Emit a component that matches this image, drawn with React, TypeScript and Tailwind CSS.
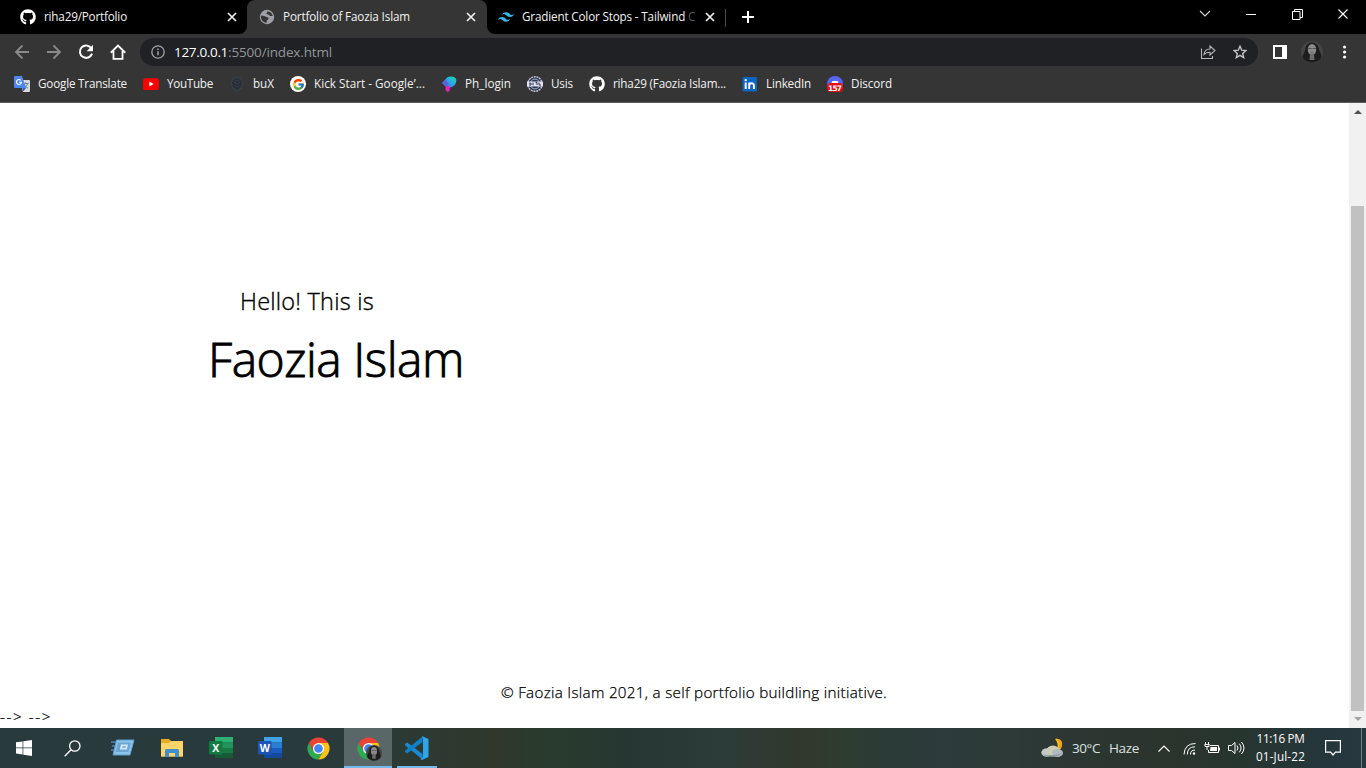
import { useLayoutEffect, useRef, useState, type ReactNode } from "react";
import { FaGithub } from "react-icons/fa";
import { SiTailwindcss } from "react-icons/si";
import { FcGoogle } from "react-icons/fc";

/** Single-line label whose tracking is measured so that it fills `width` pixels. */
function Label({ text, width, className = "" }: { text: string; width: number; className?: string }) {
  const ref = useRef<HTMLSpanElement>(null);
  const [tracking, setTracking] = useState(0);
  useLayoutEffect(() => {
    if (ref.current) {
      const natural = ref.current.getBoundingClientRect().width;
      setTracking((t) => t + (width - natural) / text.length);
    }
  }, [text, width]);
  return (
    <span ref={ref} style={{ letterSpacing: tracking }} className={`inline-block shrink-0 whitespace-pre ${className}`}>
      {text}
    </span>
  );
}

function TabClose() {
  return (
    <svg className="size-[10px] shrink-0" viewBox="0 0 10 10" stroke="#f1f1f1" strokeWidth="1.7">
      <path d="M1 1l8 8M9 1L1 9" />
    </svg>
  );
}

function Globe() {
  return (
    <svg className="size-4 shrink-0" viewBox="0 0 16 16">
      <circle cx="8" cy="8" r="7.200" fill="#9da1a5" />
      <path d="M1.800 6.800c2.200-.2 3.500-.2 4.700.8 1.200.9 2.900.5 3.100 1.800.2 1-1.200 1-1.700 2l-.5 2.500C4.500 13.300 2.500 11.500 2 9z" fill="#353535" />
      <path d="M8.500 2.300c.1 1.300-1.300 1.300-1 2.400.4 1 2 .5 2.500 1.200.7.900 1.600 1.400 3.700 1-.3-2.400-2.400-4.300-5.200-4.600z" fill="#353535" />
    </svg>
  );
}

function ChromeLogo({ className }: { className: string }) {
  return (
    <svg className={className} viewBox="0 0 48 48">
      <path d="M24 24L33.960 29.750 24 47A23 23 0 0 1 4.080 12.500L14.040 29.750z" fill="#2da94f" />
      <path d="M24 12.500H43.920A23 23 0 0 1 24 47L33.950 29.750z" fill="#fbc116" />
      <path d="M14.040 29.750L4.080 12.500A23 23 0 0 1 43.920 12.500H24z" fill="#ea4335" />
      <circle cx="24" cy="24" r="11.500" fill="#fff" />
      <circle cx="24" cy="24" r="9" fill="#4285f4" />
    </svg>
  );
}

function Portrait({ className }: { className: string }) {
  return (
    <svg className={className} viewBox="0 0 22 22">
      <circle cx="11" cy="11" r="11" fill="#454545" />
      <path d="M2.500 18C0 15 4 12 4.500 7 6 0 15.500-.5 17.500 6.500c.5 4 4.500 7 2 11.500-4 4.500-13 4.500-17 0z" fill="#1d1d1d" />
      <ellipse cx="11" cy="8.500" rx="4.200" ry="5.600" fill="#8c8c8c" />
      <path d="M9 12.500h4l.5 6.500h-5z" fill="#6c6c6c" />
      <path d="M7.500 7.500h3M11.700 7.500h3" stroke="#444" strokeWidth=".9" />
      <path d="M9.700 11.200h2.600" stroke="#555" strokeWidth=".7" />
    </svg>
  );
}

function TranslateIcon() {
  return (
    <svg className="size-4" viewBox="0 0 16 16">
      <path d="M6 4h9a1 1 0 0 1 1 1v10a1 1 0 0 1-1 1H9z" fill="#d5d9dd" />
      <path d="M9 7.500h5.500M11.700 6.500v1M13.500 7.700c-.5 2-2 3.500-3.500 4.300M10.500 9c.8 1.500 2 2.500 3.300 3" stroke="#6b7f91" strokeWidth="1" fill="none" />
      <path d="M1 0h7l4 12H1a1 1 0 0 1-1-1V1a1 1 0 0 1 1-1z" fill="#4a87ee" />
      <path d="M8.500 12H12l-2.800 3.500z" fill="#3059b0" />
      <path d="M7 4.400A2.500 2.500 0 1 0 7.500 6.300H5" stroke="#fff" strokeWidth="1.100" fill="none" />
    </svg>
  );
}

function YouTubeIcon() {
  return (
    <svg className="size-4" viewBox="0 0 16 16">
      <rect y="2.200" width="16" height="11.800" rx="2.600" fill="#f00" />
      <path d="M6.300 5.600v5L10.700 8.100z" fill="#fff" />
    </svg>
  );
}

function BuxIcon() {
  return (
    <svg className="size-4" viewBox="0 0 16 16">
      <path d="M4 2.500Q8 0 12 2.500c2 3.500 2 7.500-1 10.500l-3 2-3-2C2 10 2 6 4 2.500z" fill="#292e37" stroke="#3c4657" strokeWidth="1" />
      <path d="M5 6l3 2 3-2M5.500 9.500L8 11l2.500-1.500M6 4l2 1 2-1" stroke="#3c4657" strokeWidth=".7" fill="none" />
    </svg>
  );
}

function GoogleBadge() {
  return (
    <span className="flex size-4 items-center justify-center rounded-full bg-white">
      <FcGoogle className="size-[13px]" />
    </span>
  );
}

function PhIcon() {
  return (
    <svg className="size-4" viewBox="0 0 16 16">
      <defs>
        <linearGradient id="ph" x1="1" y1="0" x2="0" y2="1">
          <stop offset="0" stopColor="#12dfb0" />
          <stop offset=".5" stopColor="#2aa5e8" />
          <stop offset="1" stopColor="#8b3df0" />
        </linearGradient>
      </defs>
      <path d="M6 1.500C10-.5 15 .5 15.300 4c.3 4-2.800 7-6.300 7.500L1 7.500z" fill="url(#ph)" />
      <path d="M1 6.500l3.500-3L8 8l-3 3.500z" fill="#5963d8" />
      <path d="M5 10l4 .5-.5 4.500-2 1-2-2z" fill="#f51fc0" />
    </svg>
  );
}

function UsisIcon() {
  return (
    <svg className="size-4" viewBox="0 0 16 16">
      <circle cx="8" cy="8" r="7.200" fill="#2c3354" stroke="#c9cde0" strokeWidth="1.400" strokeDasharray="2 .7" />
      <circle cx="8" cy="8" r="4.900" fill="none" stroke="#b4b9d0" strokeWidth=".9" />
      <rect y="5.500" width="16" height="5" fill="#dfe2ed" />
      <path d="M2 7.200h2v1.800H2M6 6.500v2.800M8.500 6.500h1.500v2.500M12 6.500v2.500h2" stroke="#2c3354" strokeWidth="1" fill="none" />
    </svg>
  );
}

function LinkedInIcon() {
  return (
    <svg className="size-4" viewBox="0 0 16 16">
      <rect x=".5" y="1" width="14.500" height="14.500" rx="1" fill="#0a66c2" />
      <path d="M3.700 6.500v6.500" stroke="#fff" strokeWidth="2" />
      <circle cx="3.700" cy="4.100" r="1.200" fill="#fff" />
      <path d="M7.200 13V6.500M7.200 9.500c.2-2.800 4.700-3.200 4.700 0V13" stroke="#fff" strokeWidth="1.900" fill="none" />
    </svg>
  );
}

function DiscordIcon() {
  return (
    <svg className="size-4" viewBox="0 0 16 16">
      <circle cx="8" cy="8" r="8" fill="#5865f2" />
      <path d="M4.500 7L5.500 5h5l1 2z" fill="#fff" />
      <rect y="7" width="16" height="9" rx="4" fill="#e30f13" />
      <text x="8" y="14.700" textAnchor="middle" textLength="14" fontSize="7.500" fontWeight="700" fontFamily="DejaVu Sans" fill="#fff">157</text>
    </svg>
  );
}

const bookmarks: { name: string; width: number; icon: ReactNode }[] = [
  { name: "Google Translate", width: 89, icon: <TranslateIcon /> },
  { name: "YouTube", width: 46, icon: <YouTubeIcon /> },
  { name: "buX", width: 21, icon: <BuxIcon /> },
  { name: "Kick Start - Google’...", width: 111, icon: <GoogleBadge /> },
  { name: "Ph_login", width: 46, icon: <PhIcon /> },
  { name: "Usis", width: 22, icon: <UsisIcon /> },
  { name: "riha29 (Faozia Islam...", width: 113, icon: <FaGithub className="size-4 text-white" /> },
  { name: "LinkedIn", width: 45, icon: <LinkedInIcon /> },
  { name: "Discord", width: 41, icon: <DiscordIcon /> },
];

function TabStrip() {
  return (
    <div className="flex h-[34px] bg-black text-[11.7px] leading-[32px] text-[#f1f1f1]">
      <div className="flex w-[247px] items-center pl-5">
        <FaGithub className="size-4 shrink-0 text-white" />
        <Label text="riha29/Portfolio" width={83} className="mb-[2px] ml-2" />
        <span className="mr-[10px] ml-auto flex"><TabClose /></span>
      </div>
      <div className="relative flex w-[240px] items-center rounded-t-lg bg-[#353535] pl-3">
        <svg className="absolute bottom-0 -left-2 size-2" viewBox="0 0 8 8"><path d="M8 0v8H0a8 8 0 0 0 8-8z" fill="#353535" /></svg>
        <svg className="absolute -right-2 bottom-0 size-2" viewBox="0 0 8 8"><path d="M0 0v8h8a8 8 0 0 1-8-8z" fill="#353535" /></svg>
        <Globe />
        <Label text="Portfolio of Faozia Islam" width={127} className="mb-[2px] ml-2" />
        <span className="mr-[11px] ml-auto flex"><TabClose /></span>
      </div>
      <div className="flex w-[239px] items-center pl-[11px]">
        <SiTailwindcss className="size-4 shrink-0 text-[#38b6e8]" />
        <span className="mb-[2px] ml-2 flex w-[175px] overflow-hidden">
          <Label text="Gradient Color Stops - Tailwind " width={166} />
          <span className="text-[#5c5c5c]">C</span>
        </span>
        <span className="mr-[11px] ml-auto flex"><TabClose /></span>
      </div>
      <div className="mt-[9px] -ml-px h-[18px] w-px bg-[#4a4a4a]" />
      <svg className="mt-[11px] ml-4 size-3" viewBox="0 0 12 12" stroke="#fff" strokeWidth="2"><path d="M6 0v12M0 6h12" /></svg>
      <svg className="mt-[10px] ml-auto h-[8px] w-[12px]" viewBox="0 0 12 8" fill="none" stroke="#d5d5d5" strokeWidth="1.100"><path d="M1 1l5 5 5-5" /></svg>
      <svg className="mt-[9px] ml-[35px] h-[11px] w-[10px]" viewBox="0 0 10 11"><path d="M0 5.500h10" stroke="#fff" /></svg>
      <svg className="mt-[9px] ml-9 size-[11px]" viewBox="0 0 11 11" fill="none" stroke="#fff"><path d="M.5 2.500h7.500v8H.5zM2.500 2.500v-2h8v8H8" /></svg>
      <svg className="mt-[9px] mr-[18px] ml-[35px] size-[10px]" viewBox="0 0 10 10" stroke="#fff" strokeWidth="1.200"><path d="M.5.5l9 9M9.500.5l-9 9" /></svg>
    </div>
  );
}

function Toolbar() {
  return (
    <div className="flex h-9 items-center pl-[14px]">
      <svg className="size-4" viewBox="0 0 16 16" fill="none" stroke="#8a8a8a" strokeWidth="1.800"><path d="M15 8H2M8.500 1.500L2 8l6.500 6.500" /></svg>
      <svg className="ml-4 size-4" viewBox="0 0 16 16" fill="none" stroke="#8a8a8a" strokeWidth="1.800"><path d="M1 8h13M7.500 1.500L14 8l-6.500 6.500" /></svg>
      <svg className="ml-4 size-4" viewBox="0 0 16 16"><path d="M13.200 4.100A6.200 6.200 0 1 0 14 9.600" fill="none" stroke="#fff" strokeWidth="2" /><path d="M15 .8v6.400H8.600z" fill="#fff" /></svg>
      <svg className="ml-4 size-4" viewBox="0 0 17 17" fill="none" stroke="#fff" strokeWidth="1.900"><path d="M.8 9.300L8.500 1.600l7.700 7.700M3.700 7.500v8.200h9.600V7.500" /></svg>
      <div className="ml-[14px] flex h-7 w-[1118px] items-center rounded-full bg-[#202124] pl-[11px] text-[13.500px] leading-7">
        <svg className="size-[14px]" viewBox="0 0 14 14" fill="none" stroke="#a0a4a8" strokeWidth="1.300"><circle cx="7" cy="7" r="6.200" /><path d="M7 6.200v4M7 3.500v1.400" strokeWidth="1.500" /></svg>
        <Label text="127.0.0.1" width={54} className="ml-[9px] text-white" />
        <Label text=":5500/index.html" width={104} className="text-[#92969b]" />
        <svg className="ml-auto size-4" viewBox="0 0 16 16" fill="none" stroke="#b4b6b8" strokeWidth="1.100"><path d="M1.500 4.500v10h11v-2.500M4 10.500c.3-3.500 2.500-5.500 6-5.500V2l5 4.500L10 11V8.200c-2.700 0-4.500.6-6 2.300z" /></svg>
        <svg className="mr-[11px] ml-[17px] size-[14px]" viewBox="0 0 14 14" fill="none" stroke="#c3c5c7" strokeWidth="1.400"><path d="M7 1.300l1.700 3.900 4.200.4-3.200 2.800 1 4.200L7 10.400l-3.700 2.200 1-4.200L1.100 5.600l4.200-.4z" /></svg>
      </div>
      <svg className="ml-[15px] size-[14px]" viewBox="0 0 14 14"><path d="M0 0h14v14H0zM2 2v10h7V2z" fill="#fff" fillRule="evenodd" /></svg>
      <Portrait className="ml-[14px] size-[22px]" />
      <svg className="ml-5 h-[14px] w-1" viewBox="0 0 4 14" fill="#fff"><circle cx="1.600" cy="2" r="1.600" /><circle cx="1.600" cy="7" r="1.600" /><circle cx="1.600" cy="12" r="1.600" /></svg>
    </div>
  );
}

function BookmarkBar() {
  return (
    <div className="flex h-[33px] items-start gap-4 border-b border-[#5c5c5c] pt-[6px] pl-[14px] text-[11.700px] leading-[15px] text-[#f1f1f1]">
      {bookmarks.map((b) => (
        <div key={b.name} className="flex items-start gap-2">
          {b.icon}
          <Label text={b.name} width={b.width} />
        </div>
      ))}
    </div>
  );
}

function Page() {
  return (
    <div className="flex h-[625px] bg-white text-black">
      <main className="flex flex-1 flex-col font-light">
        <div className="pt-[182px] pl-[240px] text-[23.500px] leading-8 [-webkit-text-stroke:0.35px_black]"><Label text="Hello! This is" width={134} /></div>
        <div className="pt-[10px] pl-[208px] text-[48px] leading-[64px] [-webkit-text-stroke:0.9px_black]"><Label text="Faozia Islam" width={256} /></div>
        <div className="mt-auto pl-[501px] text-[15.200px] leading-6 [-webkit-text-stroke:0.25px_black]"><Label text="© Faozia Islam 2021, a self portfolio buildling initiative." width={386} /></div>
        <div className="pt-px text-[15px] leading-[23px] [-webkit-text-stroke:0.25px_black]"><Label text="--> -->" width={52} /></div>
      </main>
      <div className="flex w-[17px] flex-col items-center bg-[#f1f1f1]">
        <svg className="mt-[7px] h-[4px] w-[8px] shrink-0" viewBox="0 0 8 4"><path d="M0 4l4-4 4 4z" fill="#505050" /></svg>
        <div className="mt-[92px] h-[505px] w-[13px] bg-[#c1c1c1]" />
        <svg className="mt-[6px] h-[4px] w-[8px] shrink-0" viewBox="0 0 8 4"><path d="M0 0h8L4 4z" fill="#a3a3a3" /></svg>
      </div>
    </div>
  );
}

function OfficeIcon({ letter, shades }: { letter: string; shades: string[] }) {
  return (
    <svg className="size-6" viewBox="0 0 24 24">
      <rect x="6" y="1" width="18" height="5.500" fill={shades[0]} />
      <rect x="6" y="6.500" width="18" height="5.500" fill={shades[1]} />
      <rect x="6" y="12" width="18" height="5" fill={shades[2]} />
      <rect x="6" y="17" width="18" height="5" fill={shades[3]} />
      <rect y="5" width="13.500" height="13.500" rx="1" fill={shades[4]} />
      <text x="6.800" y="15.500" textAnchor="middle" fontSize="10.500" fontWeight="700" fontFamily="Open Sans" fill="#fff">{letter}</text>
    </svg>
  );
}

function Taskbar() {
  return (
    <div className="flex h-10 items-center text-white">
      <div className="flex h-10 w-[500px] items-center bg-[linear-gradient(90deg,#293a3d_0%,#293a3d_60%,#2b3a35_78%,#30382b_100%)]">
        <svg className="ml-4 size-4" viewBox="0 0 16 16" fill="#fff"><path d="M0 2.300l6.600-.9v6.100H0zM7.300 1.300L16 0v7.500H7.300zM0 8.300h6.600v6.200L0 13.600zM7.300 8.300H16V16l-8.700-1.300z" /></svg>
        <svg className="ml-8 size-[17px]" viewBox="0 0 17 17" fill="none" stroke="#fff" strokeWidth="1.300"><circle cx="10.800" cy="6" r="5.200" /><path d="M7 9.800L.7 16.200" /></svg>
        <svg className="ml-[30px] h-[18px] w-6" viewBox="0 0 24 18">
          <path d="M0 3h5M1 7h5M0 11h5" stroke="#4c87ab" strokeWidth="1.500" />
          <path d="M5.500 1H23l-4 15H2z" fill="#8fc4ea" stroke="#5b9dcd" />
          <path d="M7 3.500h13L17.500 13h-13z" fill="#6ba6d3" />
          <path d="M10 5.500h7l-1.200 5H8.800z" fill="#d1e9fa" />
          <path d="M11.500 7.200h3.500l-.4 1.600H11z" fill="#6ba6d3" />
        </svg>
        <svg className="ml-[26px] h-[18px] w-[22px]" viewBox="0 0 22 18">
          <path d="M0 0h8l2 2h11a1 1 0 0 1 1 1v14.500H0z" fill="#e9a826" />
          <path d="M0 4h8l2-2h12v15.500H0z" fill="#ffd56a" />
          <path d="M4 18v-6.500a1.500 1.500 0 0 1 1.500-1.500h11a1.500 1.500 0 0 1 1.500 1.500V18h-4v-4H8v4z" fill="#3e8fcb" />
        </svg>
        <span className="ml-[26px]"><OfficeIcon letter="X" shades={["#2db274", "#20945a", "#187943", "#155b36", "#107c41"]} /></span>
        <span className="ml-[25px]"><OfficeIcon letter="W" shades={["#3fa3e8", "#2b7cd3", "#1b5bbd", "#134a9d", "#1b55b8"]} /></span>
        <ChromeLogo className="ml-[25px] size-[23px]" />
        <div className="relative ml-[14px] flex h-10 w-12 items-center justify-center border-b-2 border-[#76b9ed] bg-[#596769] pt-[2px]">
          <ChromeLogo className="size-[23px]" />
          <Portrait className="absolute top-[17px] left-[22px] size-4" />
        </div>
        <div className="ml-[5px] flex h-10 w-10 items-center justify-center border-b-2 border-[#76b9ed] pt-[2px]">
          <svg className="size-6" viewBox="0 0 24 24">
            <path d="M0 8l2-1.500 4 2.800L17.500 18v5.500L0 9.300z" fill="#1a8bd3" />
            <path d="M0 16l2 1.500L17.500 6V.5L0 14.700z" fill="#0f7fc9" />
            <path d="M17 0l6.500 3v18L17 24l-1.500-.7L18 21V3z" fill="#2fa4ea" />
          </svg>
        </div>
      </div>
      <div className="h-10 w-[520px] bg-[linear-gradient(90deg,#30382b_0%,#2a3b2e_6%,#28392e_15%,#263733_24%,#2c3c39_43%,#2f3a31_51%,#31382c_59%,#2d3d30_66%,#2b3c37_74%,#2c3b3b_85%,#2d3a37_100%)]" />
      <div className="flex h-10 flex-1 items-center bg-[linear-gradient(90deg,#2d3937,#2b342d_40%,#27352f_62%,#25373c_90%,#26393f)]">
        <svg className="ml-[21px] h-5 w-[23px]" viewBox="0 0 23 20">
          <path d="M14 1c5-1 8 3 6.500 8-.8 3-3.500 4-6 4 3-3 3-8-.5-12z" fill="#fbbd20" />
          <path d="M14.500 1C19 2 20 8 16 11l4-1c3-5 0-10-5.500-9z" fill="#f2a01e" />
          <ellipse cx="6" cy="14.500" rx="5.700" ry="4.300" fill="#c3c9c9" />
          <ellipse cx="12" cy="13" rx="6.500" ry="5.500" fill="#cdcbb5" />
          <ellipse cx="16.500" cy="15" rx="5.500" ry="4" fill="#b0b9be" />
          <path d="M1 16c3 3.500 17 3.500 20-1-4 2-15 3-20 1z" fill="#8f9ca2" />
        </svg>
        <Label text="30°C" width={28} className="ml-2 text-[13.500px] text-[#dde1e0]" />
        <Label text="Haze" width={30} className="ml-[9px] text-[13.500px] text-[#dde1e0]" />
        <svg className="ml-[19px] h-[7px] w-3" viewBox="0 0 12 7" fill="none" stroke="#fff" strokeWidth="1.200"><path d="M.5 6.500L6 1l5.500 5.500" /></svg>
        <svg className="ml-[13px] size-[13px]" viewBox="0 0 13 13" fill="none" stroke="#fff">
          <circle cx="11" cy="11.500" r="1.200" fill="#fff" stroke="none" />
          <path d="M7.500 12.500Q7.500 8 12 8M4.300 12.500Q4.300 4.800 12 4.800M1 12.500Q1.500 1.500 12.500 1.500" />
        </svg>
        <svg className="ml-2 h-[13px] w-4" viewBox="0 0 16 13" fill="none" stroke="#fff">
          <path d="M6 3.500h8.500v7h-10V8M15.500 5.500v3" />
          <path d="M6.500 5h6.500v4H6z" fill="#fff" stroke="none" />
          <path d="M1.500 0v2M4.500 0v2M.5 2.500h5M1 3v1.500h4V3M3 5v3" />
        </svg>
        <svg className="ml-2 h-[14px] w-[17px]" viewBox="0 0 17 14" fill="none" stroke="#fff">
          <path d="M.5 4.500h3l3.500-3v11l-3.500-3h-3zM9 4.500q2 2.500 0 5M11.300 2.700q3.500 4.300 0 8.600M13.500 1q5 6 0 12" />
        </svg>
        <div className="mb-[2px] ml-[11px] flex w-[49px] flex-col items-center text-[11.700px] leading-[18px]">
          <Label text="11:16 PM" width={48} />
          <Label text="01-Jul-22" width={49} />
        </div>
        <svg className="ml-5 size-4" viewBox="0 0 16 16" fill="none" stroke="#fff" strokeWidth="1.200"><path d="M.6.6h14.800v11.500h-5L8 15l-2.400-2.900h-5z" /></svg>
        <div className="mr-1 ml-auto h-10 w-px bg-[#71807f]" />
      </div>
    </div>
  );
}

export default function App() {
  return (
    <div className="h-[768px] w-[1366px] overflow-hidden bg-[#353535] font-['Open_Sans',sans-serif]">
      <TabStrip />
      <Toolbar />
      <BookmarkBar />
      <Page />
      <Taskbar />
    </div>
  );
}
